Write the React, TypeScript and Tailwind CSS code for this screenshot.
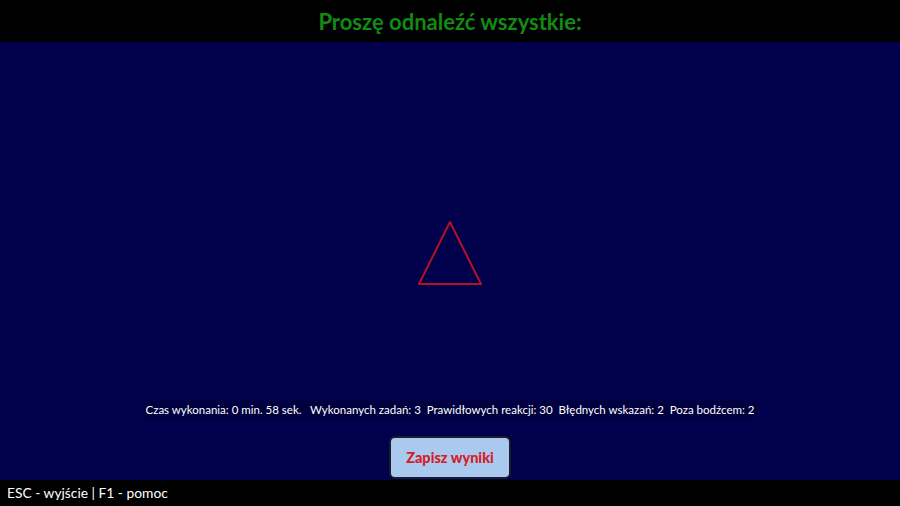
const font = { fontFamily: "Lato, 'Open Sans', 'Noto Sans', sans-serif" };

function Triangle() {
  return (
    <svg width="64" height="64" viewBox="0 0 64 64" className="block">
      <polygon points="32,1 1,63 63,63" fill="none" stroke="#b3121f" strokeWidth="2" />
    </svg>
  );
}

export default function App() {
  return (
    <div className="flex h-[506px] w-[900px] flex-col bg-[#00004d] text-white" style={font}>
      <header className="flex h-[42px] items-center justify-center bg-black">
        <h1 className="text-[22px] font-bold text-[#138a13]">Proszę odnaleźć wszystkie:</h1>
      </header>

      <main className="flex flex-1 flex-col items-center">
        <div className="mt-[179px]">
          <Triangle />
        </div>

        <p className="mt-[116px] bg-[#00003e] px-[3px] py-[1px] text-[11.5px] leading-[15px] whitespace-pre">
          {"Czas wykonania: 0 min. 58 sek.   Wykonanych zadań: 3  Prawidłowych reakcji: 30  Błędnych wskazań: 2  Poza bodźcem: 2"}
        </p>

        <button className="mt-[18px] h-[43px] w-[122px] rounded-[6px] border-2 border-[#1b1b2b] bg-[#a9c9ef] text-[14.5px] font-black text-[#d51d25]">
          Zapisz wyniki
        </button>
      </main>

      <footer className="flex h-[26px] items-center bg-black px-[7px]">
        <span className="text-[13.8px]">ESC - wyjście | F1 - pomoc</span>
      </footer>
    </div>
  );
}
